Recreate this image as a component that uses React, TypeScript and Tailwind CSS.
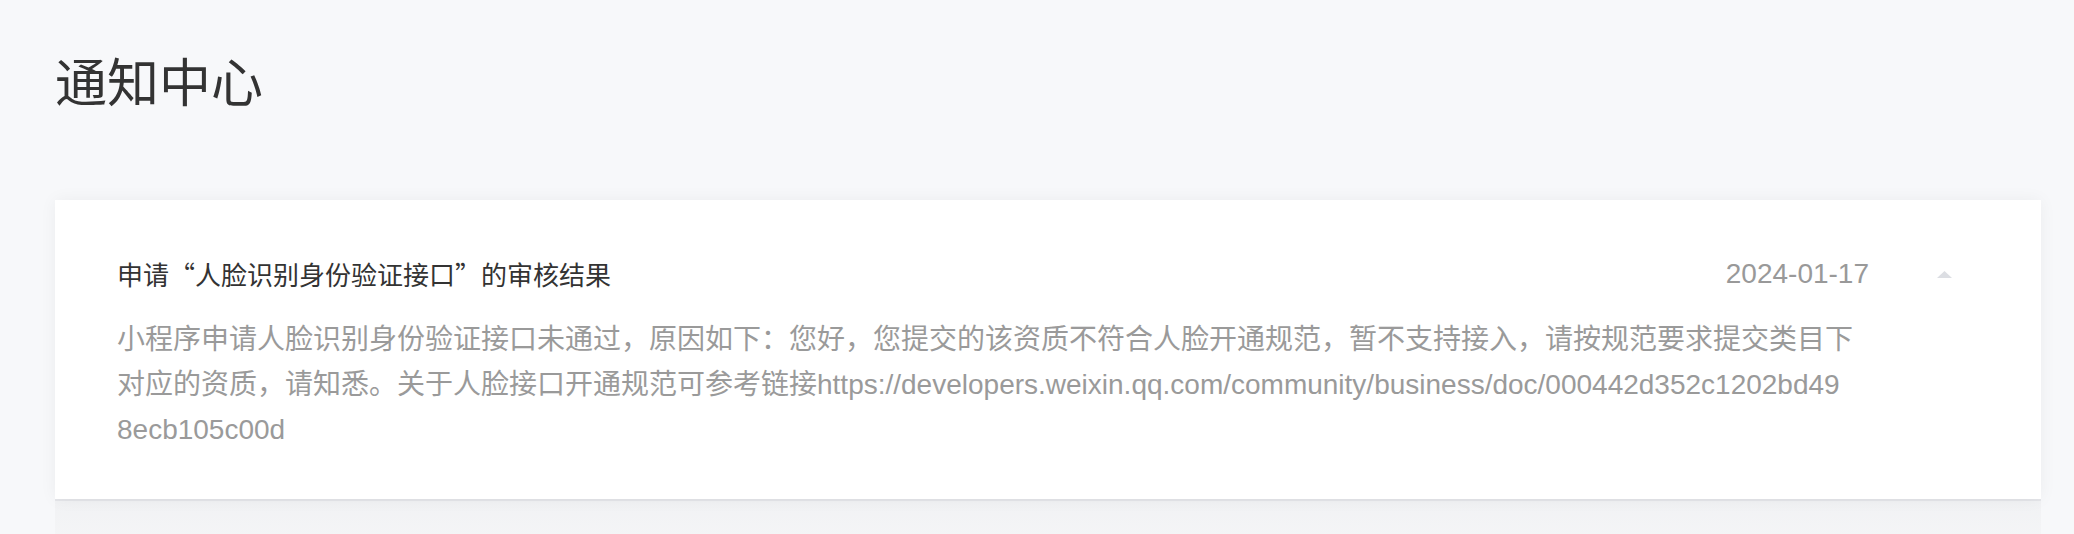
import React, { useState } from 'react';

type Notice = {
	id: number;
	title: string;
	date: string;
	content: string;
};

const notices: Notice[] = [
	{
		id: 1,
		title: '申请“人脸识别身份验证接口”的审核结果',
		date: '2024-01-17',
		content:
			'小程序申请人脸识别身份验证接口未通过，原因如下：您好，您提交的该资质不符合人脸开通规范，暂不支持接入，请按规范要求提交类目下对应的资质，请知悉。关于人脸接口开通规范可参考链接https://developers.weixin.qq.com/community/business/doc/000442d352c1202bd498ecb105c00d',
	},
	{
		id: 2,
		title: '申请“获取用户手机号接口”的审核结果',
		date: '2024-01-12',
		content: '小程序申请获取用户手机号接口已通过，请知悉。',
	},
];

const Arrow = ({ open }: { open: boolean }) => (
	<svg
		width="15"
		height="7"
		viewBox="0 0 15 7"
		className={open ? '' : 'rotate-180'}
	>
		<path d="M7.5 0 L15 7 L0 7 Z" fill="#dcdee3" />
	</svg>
);

const NoticeCard = ({ notice, first }: { notice: Notice; first: boolean }) => {
	const [open, setOpen] = useState<boolean>(first);

	return (
		<div
			className={
				first
					? 'bg-white shadow-[0_0_16px_rgba(0,0,0,0.05)] pl-[62px] pr-[89px] pt-[54px] pb-[47px] flex relative z-10'
					: 'bg-linear-to-b from-[#f1f2f4] to-[#fdfdfd] border-t-2 border-[#e4e5e9] pl-[62px] pr-[89px] pt-[54px] pb-[47px] flex'
			}
		>
			<div className="w-[1752px] shrink-0">
				<div className="flex items-center justify-between h-[40px]">
					<h2 className="text-[26px] leading-[40px] text-[#333] font-['Noto_Sans_CJK_SC',sans-serif]">
						{notice.title}
					</h2>
					<span className="text-[28px] text-[#999] font-['Liberation_Sans',sans-serif]">
						{notice.date}
					</span>
				</div>
				{open && (
					<p className="mt-[23px] w-[1737px] text-[28px] leading-[45px] text-[#9a9a9a] break-all font-['Liberation_Sans','Noto_Sans_CJK_SC',sans-serif]">
						{notice.content}
					</p>
				)}
			</div>
			<button
				className="w-[83px] h-[40px] shrink-0 flex items-center justify-end cursor-pointer"
				onClick={() => setOpen(!open)}
			>
				<Arrow open={open} />
			</button>
		</div>
	);
};

const App = () => {
	return (
		<div className="min-h-screen bg-[#f7f8fa] pl-[55px] pr-[33px] pt-[54px] font-['Noto_Sans_CJK_SC',sans-serif]">
			<h1 className="text-[52px] leading-none text-[#333] font-normal mb-[94px]">
				通知中心
			</h1>
			<div className="flex flex-col">
				{notices.map((n, i) => (
					<NoticeCard key={n.id} notice={n} first={i === 0} />
				))}
			</div>
		</div>
	);
};

export default App;
